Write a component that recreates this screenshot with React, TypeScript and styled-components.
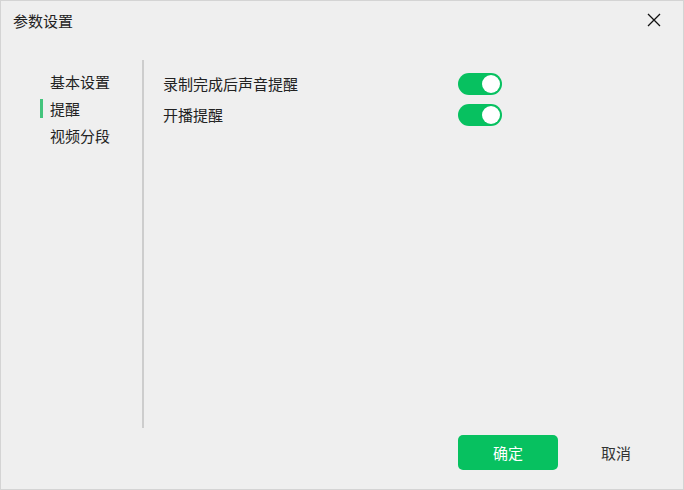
import { Fragment, useState } from "react";
import styled, { createGlobalStyle } from "styled-components";

const GlobalStyle = createGlobalStyle`
  html, body {
    margin: 0;
    padding: 0;
    background: #efefef;
  }
  * {
    box-sizing: border-box;
  }
`;

const Window = styled.div`
  width: 684px;
  height: 490px;
  border: 1px solid #d4d4d4;
  background: #efefef;
  display: flex;
  flex-direction: column;
  font-family: "Microsoft YaHei", "Noto Sans CJK SC", "Noto Sans", sans-serif;
  color: #222;
`;

const Header = styled.div`
  height: 38px;
  display: flex;
  align-items: center;
  justify-content: space-between;
  padding: 0 21px 0 12px;
`;

const Title = styled.div`
  font-size: 15px;
`;

const CloseButton = styled.button`
  width: 16px;
  height: 16px;
  padding: 0;
  border: none;
  background: none;
  cursor: pointer;
  display: flex;
  align-items: center;
  justify-content: center;
  color: #111;
`;

const Body = styled.div`
  margin-top: 21px;
  height: 368px;
  display: flex;
`;

const Sidebar = styled.div`
  width: 143px;
  border-right: 2px solid #cdcdcd;
  padding-top: 8px;
  display: flex;
  flex-direction: column;
`;

const NavItem = styled.div<{ $active?: boolean }>`
  position: relative;
  height: 27px;
  line-height: 27px;
  padding-left: 49px;
  font-size: 15px;
  cursor: pointer;

  &::before {
    content: "";
    display: ${(p) => (p.$active ? "block" : "none")};
    position: absolute;
    left: 39px;
    top: 4px;
    width: 3px;
    height: 19px;
    background: #43c47c;
  }
`;

const Content = styled.div`
  flex: 1;
  padding: 13px 0 0 19px;
  display: grid;
  grid-template-columns: 295px 44px;
  grid-auto-rows: 22px;
  row-gap: 9px;
  align-content: start;
`;

const Label = styled.div`
  font-size: 15px;
  line-height: 22px;
`;

const Toggle = styled.button<{ $on: boolean }>`
  position: relative;
  width: 44px;
  height: 22px;
  padding: 0;
  border: none;
  border-radius: 11px;
  background: ${(p) => (p.$on ? "#07c160" : "#c8c8c8")};
  cursor: pointer;

  &::after {
    content: "";
    position: absolute;
    top: 2px;
    left: ${(p) => (p.$on ? "24px" : "2px")};
    width: 18px;
    height: 18px;
    border-radius: 50%;
    background: #fff;
  }
`;

const Footer = styled.div`
  padding: 7px 17px 0 0;
  display: flex;
  justify-content: flex-end;
  gap: 8px;
`;

const Button = styled.button<{ $primary?: boolean }>`
  width: 100px;
  height: 35px;
  border: none;
  border-radius: 5px;
  font-family: inherit;
  font-size: 15px;
  cursor: pointer;
  background: ${(p) => (p.$primary ? "#07c160" : "transparent")};
  color: ${(p) => (p.$primary ? "#fff" : "#333")};
`;

const navItems = ["基本设置", "提醒", "视频分段"];

export default function App() {
  const [active, setActive] = useState(1);
  const [settings, setSettings] = useState([
    { label: "录制完成后声音提醒", on: true },
    { label: "开播提醒", on: true },
  ]);

  const flip = (i: number) =>
    setSettings((s) => s.map((x, j) => (j === i ? { ...x, on: !x.on } : x)));

  return (
    <>
      <GlobalStyle />
      <Window>
        <Header>
          <Title>参数设置</Title>
          <CloseButton aria-label="关闭">
            <svg width="14" height="14" viewBox="0 0 14 14">
              <path
                d="M1 1 L13 13 M13 1 L1 13"
                stroke="currentColor"
                strokeWidth="1.3"
                fill="none"
              />
            </svg>
          </CloseButton>
        </Header>
        <Body>
          <Sidebar>
            {navItems.map((n, i) => (
              <NavItem key={n} $active={i === active} onClick={() => setActive(i)}>
                {n}
              </NavItem>
            ))}
          </Sidebar>
          <Content>
            {settings.map((s, i) => (
              <Fragment key={s.label}>
                <Label>{s.label}</Label>
                <Toggle $on={s.on} onClick={() => flip(i)} />
              </Fragment>
            ))}
          </Content>
        </Body>
        <Footer>
          <Button $primary>确定</Button>
          <Button>取消</Button>
        </Footer>
      </Window>
    </>
  );
}
